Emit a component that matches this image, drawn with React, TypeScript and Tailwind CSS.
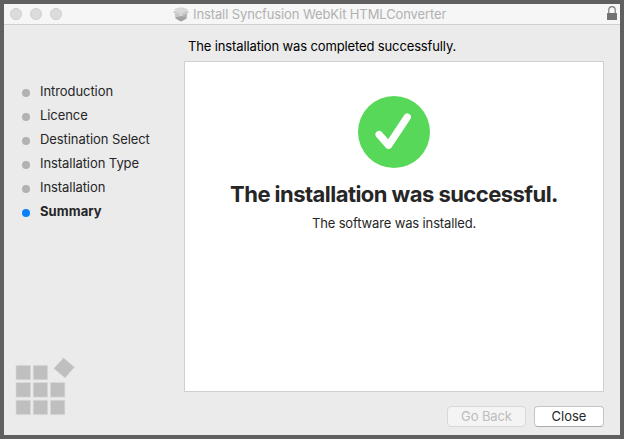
import React from "react";

type Step = { label: string; current?: boolean };

const steps: Step[] = [
  { label: "Introduction" },
  { label: "Licence" },
  { label: "Destination Select" },
  { label: "Installation Type" },
  { label: "Installation" },
  { label: "Summary", current: true },
];

function PackageIcon() {
  return (
    <svg className="h-[15px] w-4 shrink-0" viewBox="0 0 16 15">
      <path d="M1.8 6 8 9v5.4L2.4 11.4z" fill="#c4c4c4" />
      <path d="M14.2 6 8 9v5.4l5.6-3z" fill="#b0b0b0" />
      <path d="M2.6 10.4 8 9.2l5.4 1.2-.2 1.2L8 14.4l-5.2-2.8z" fill="#a2a2a2" />
      <path d="M2 4 8 1.2 14 4 8 8z" fill="#dadada" />
      <path d="M0 5.2 2 3.6 8 7.4 7 9z" fill="#cecece" />
      <path d="M16 5.2 14 3.6 8 7.4l1 1.6z" fill="#c8c8c8" />
      <path d="M2 3.6 1.4 2.2 7 .2l1 1.2zM14 3.6l.6-1.4L9 .2 8 1.4z" fill="#d0d0d0" />
    </svg>
  );
}

function LockIcon() {
  return (
    <svg className="h-[15px] w-[10px]" viewBox="0 0 10 15">
      <path d="M1.8 8V3.8a3.2 3.2 0 0 1 6.4 0V8" fill="none" stroke="#7b7b7b" strokeWidth="1.2" />
      <rect y="7" width="10" height="7" rx="0.6" fill="#727272" />
    </svg>
  );
}

function TitleBar() {
  return (
    <header className="flex h-[21px] shrink-0 justify-between border-b border-[#d0d0d0] bg-[#f6f6f6]">
      <div className="flex w-[168px] gap-2 pt-1 pl-[6px]">
        {[0, 1, 2].map((n) => (
          <span key={n} className="size-3 rounded-full border border-[#d0d0d0] bg-[#dcdcdc]" />
        ))}
      </div>
      <div className="flex grow gap-1 pt-[3px] pl-[1px]">
        <PackageIcon />
        <h1 className="text-[13px] leading-[15px] tracking-[-0.11px] whitespace-nowrap text-[#b1b1b1]">
          Install Syncfusion WebKit HTMLConverter
        </h1>
      </div>
      <div className="pt-[2px] pr-[3px]">
        <LockIcon />
      </div>
    </header>
  );
}

function StepList() {
  return (
    <ol className="pt-[54px] pl-[18px]">
      {steps.map((step) => (
        <li key={step.label} className="flex h-6 items-center gap-[10px]">
          <span
            className={`mt-[3px] size-2 rounded-full ${step.current ? "bg-[#0a80fb]" : "bg-[#b2b2b2]"}`}
          />
          <span
            className={`text-[13px] leading-4 text-[#262626] ${step.current ? "font-bold tracking-[0.08px]" : "tracking-[-0.07px]"}`}
          >
            {step.label}
          </span>
        </li>
      ))}
    </ol>
  );
}

function Logo() {
  return (
    <svg className="mb-[19px] ml-[11px] h-[59px] w-[61px]" viewBox="0 0 61 59" fill="#bfbfbf" stroke="#d9d9d9" strokeWidth="0.7">
      <rect x="1" y="8.3" width="14.5" height="14.5" />
      <rect x="18.2" y="8.3" width="14.5" height="14.5" />
      <rect x="1" y="25.6" width="14.5" height="14.5" />
      <rect x="18.2" y="25.6" width="14.5" height="14.5" />
      <rect x="35.4" y="25.6" width="14.5" height="14.5" />
      <rect x="1" y="43.2" width="14.5" height="14.5" />
      <rect x="18.2" y="43.2" width="14.5" height="14.5" />
      <rect x="35.4" y="43.2" width="14.5" height="14.5" />
      <path d="M48.6 .8 59.4 10.2 50 21 38.8 11.4z" />
    </svg>
  );
}

export default function App() {
  return (
    <main className="h-[439px] w-[624px] bg-[#606060] p-1 font-['Inter','Liberation_Sans',sans-serif]">
      <section className="flex h-[431px] w-[616px] flex-col bg-[#ebebeb]">
        <TitleBar />
        <div className="flex min-h-0 grow">
          <aside className="flex w-[180px] shrink-0 flex-col justify-between">
            <StepList />
            <Logo />
          </aside>
          <div className="flex w-[420px] shrink-0 flex-col">
            <p className="h-9 pt-[13px] pl-1 text-[13px] leading-4 tracking-[-0.13px] whitespace-nowrap text-black">
              The installation was completed successfully.
            </p>
            <div className="flex h-[331px] flex-col items-center border border-[#d0d0d0] bg-white pt-[34px]">
              <svg className="size-[72px]" viewBox="0 0 72 72">
                <circle cx="36" cy="36" r="36" fill="#58d858" />
                <path
                  d="M21.2 38.6 30.6 49.2 49.2 21.2"
                  fill="none"
                  stroke="white"
                  strokeWidth="7.4"
                  strokeLinecap="round"
                  strokeLinejoin="round"
                />
              </svg>
              <h2 className="mt-3 text-[22px] leading-7 font-bold tracking-[-0.54px] whitespace-nowrap text-[#262626]">
                The installation was successful.
              </h2>
              <p className="mt-[7px] text-[13px] leading-4 tracking-[-0.14px] whitespace-nowrap text-[#262626]">
                The software was installed.
              </p>
            </div>
            <footer className="flex justify-end gap-2 pt-[14px]">
              <button disabled className="h-[21px] w-[79px] rounded-[4px] border border-[#d8d8d8] bg-[#f4f4f4] text-[13px] leading-[19px] tracking-[-0.1px] text-[#bdbdbd]">
                Go Back
              </button>
              <button className="h-[21px] w-[70px] rounded-[4px] border border-[#c4c4c4] border-b-[#acacac] bg-white text-[13px] leading-[19px] text-[#262626]">
                Close
              </button>
            </footer>
          </div>
        </div>
      </section>
    </main>
  );
}
